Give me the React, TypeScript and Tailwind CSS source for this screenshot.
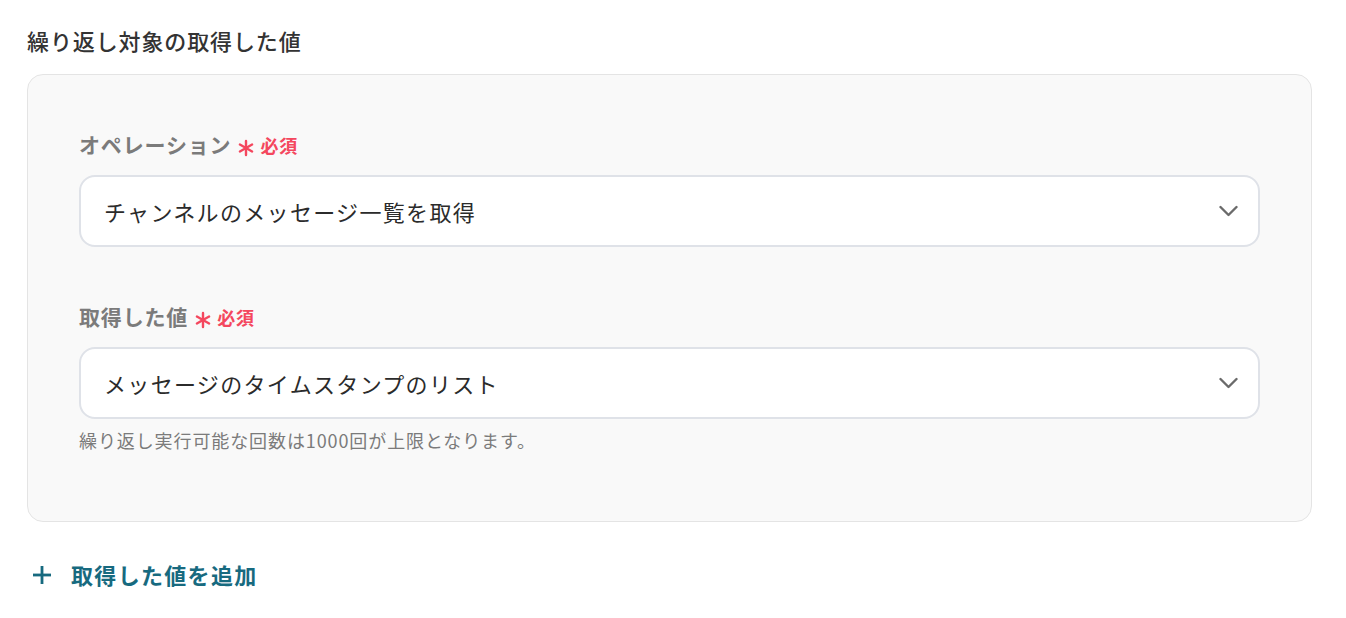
const font = { fontFamily: '"Noto Sans CJK JP", "Noto Sans", sans-serif' };

function Asterisk() {
  return (
    <svg width="18" height="18" viewBox="0 0 18 18" className="mt-[6px] text-[#f4475e]" aria-hidden>
      <g stroke="currentColor" strokeWidth="2.4" strokeLinecap="round">
        <path d="M9 2v14" />
        <path d="M2.9 5.5l12.2 7" />
        <path d="M2.9 12.5l12.2-7" />
      </g>
    </svg>
  );
}

function Label({ text }: { text: string }) {
  return (
    <div className="flex h-[30px] items-center">
      <span className="text-[21px] font-bold tracking-[0.04em] text-[#7b7b7b]">
        {text}
      </span>
      <span className="ml-[6px]">
        <Asterisk />
      </span>
      <span className="ml-[5px] text-[18px] font-bold tracking-[0.04em] text-[#f4475e]">必須</span>
    </div>
  );
}

function Select({ value }: { value: string }) {
  return (
    <div className="flex h-[72px] items-center justify-between rounded-[16px] border-2 border-[#dfe2e8] bg-white pl-[23px] pr-[20px]">
      <span className="text-[22px] tracking-[0.06em] text-[#2b2b2b]">{value}</span>
      <svg width="19" height="12" viewBox="0 0 19 12" className="text-[#6a6a6a]" aria-hidden>
        <path d="M1.5 2l8 8 8-8" fill="none" stroke="currentColor" strokeWidth="2.4" strokeLinecap="round" strokeLinejoin="round" />
      </svg>
    </div>
  );
}

export default function App() {
  return (
    <div style={font} className="min-h-[618px] bg-white pl-[27px] pr-[34px] pt-[25px]">
      <h2 className="h-[30px] text-[22px] font-medium leading-[30px] tracking-[0.04em] text-[#333]">
        繰り返し対象の取得した値
      </h2>

      <div className="mt-[19px] rounded-[16px] border-[1.5px] border-[#e4e4e4] bg-[#f9f9f9] px-[51px] pb-[68px] pt-[55px]">
        <Label text="オペレーション" />
        <div className="mt-[15px]">
          <Select value="チャンネルのメッセージ一覧を取得" />
        </div>

        <div className="mt-[55px]">
          <Label text="取得した値" />
        </div>
        <div className="mt-[15px]">
          <Select value="メッセージのタイムスタンプのリスト" />
        </div>
        <p className="mt-[8px] text-[18px] leading-[26px] tracking-[0.05em] text-[#7b7b7b]">
          繰り返し実行可能な回数は1000回が上限となります。
        </p>
      </div>

      <button className="mt-[36px] flex items-center gap-[19px] pl-[5px] text-[#176a7f]">
        <svg width="20" height="20" viewBox="0 0 20 20" aria-hidden>
          <g stroke="currentColor" strokeWidth="2.8" strokeLinecap="butt">
            <path d="M10 1v18" />
            <path d="M1 10h18" />
          </g>
        </svg>
        <span className="text-[22px] font-bold tracking-[0.06em]">取得した値を追加</span>
      </button>
    </div>
  );
}
